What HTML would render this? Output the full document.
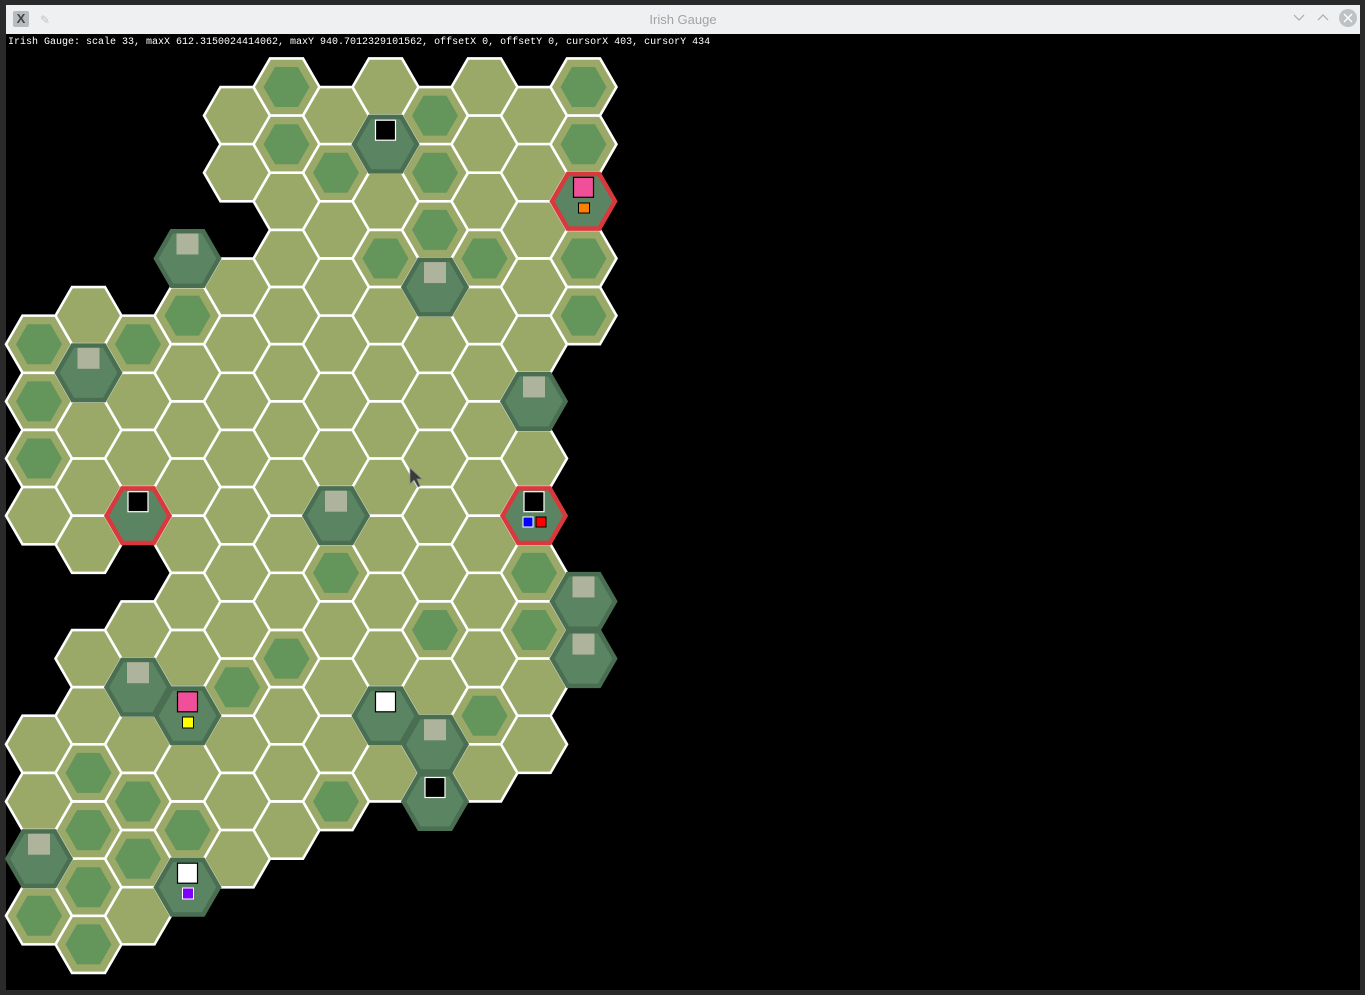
<!DOCTYPE html>
<html><head><meta charset="utf-8"><style>
html,body{margin:0;padding:0;background:#2a2a2b;width:1365px;height:995px;overflow:hidden}
#tb{position:absolute;left:6px;top:5px;width:1354px;height:29px;background:#eff0f1}
#tt{position:absolute;left:0;width:100%;top:7px;text-align:center;font:13px "Liberation Sans",sans-serif;color:#a0a4a8}
#cv{position:absolute;left:6px;top:34px;width:1354px;height:956px;background:#000}
#info{position:absolute;left:8px;top:37px;font:10px "Liberation Mono",monospace;color:#fff;white-space:pre}
svg{position:absolute;left:0;top:0}
</style></head><body>
<div id="tb"><div id="tt">Irish Gauge</div>
<div style="position:absolute;left:7px;top:6px;width:16px;height:16px;background:#b8bcc0;border-radius:2px;font:bold 13px 'Liberation Sans',sans-serif;color:#444;text-align:center;line-height:16px">X</div>
<div style="position:absolute;left:34px;top:8px;color:#c0c3c6;font:12px 'DejaVu Sans',sans-serif">✎</div>
<svg width="1354" height="29" style="left:0;top:0">
<path d="M1288 10 l5 5 l5 -5" fill="none" stroke="#a8abae" stroke-width="1.2"/>
<path d="M1312 15 l5 -5 l5 5" fill="none" stroke="#a8abae" stroke-width="1.2"/>
<circle cx="1342" cy="13" r="9" fill="#bfc2c5"/>
<path d="M1338 9 l8 8 M1346 9 l-8 8" stroke="#fff" stroke-width="1.4"/>
</svg></div>
<div id="cv"></div>
<div id="info">Irish Gauge: scale 33, maxX 612.3150024414062, maxY 940.7012329101562, offsetX 0, offsetY 0, cursorX 403, cursorY 434</div>
<svg width="1365" height="995">
<defs>
<polygon id="p" points="33,0 16.5,28.58 -16.5,28.58 -33,0 -16.5,-28.58 16.5,-28.58" fill="#9ba968" stroke="#fff" stroke-width="2.6"/>
<g id="f"><use href="#p"/><polygon points="23,0 11.5,20 -11.5,20 -23,0 -11.5,-20 11.5,-20" fill="#64955a"/></g>
<polygon id="c" points="31.5,0 15.75,27.3 -15.75,27.3 -31.5,0 -15.75,-27.3 15.75,-27.3" fill="#5a8462" stroke="#4a6e52" stroke-width="4.5"/>
<polygon id="r" points="31.5,0 15.75,27.3 -15.75,27.3 -31.5,0 -15.75,-27.3 15.75,-27.3" fill="#5a8462" stroke="#d9393c" stroke-width="4.5"/>
<rect id="ls" x="-11" y="-25" width="22" height="21" fill="#aeb39b"/>
<rect id="bs" x="-10" y="-24" width="20" height="20" fill="#000" stroke="#fff" stroke-width="1.2"/>
<rect id="ws" x="-10" y="-24" width="20" height="20" fill="#fff" stroke="#000" stroke-width="1.2"/>
<rect id="ps" x="-10" y="-24" width="20" height="20" fill="#f0509a" stroke="#000" stroke-width="1.2"/>
</defs>
<use href="#f" x="39" y="344.2"/><use href="#f" x="39" y="401.4"/><use href="#f" x="39" y="458.5"/><use href="#p" x="39" y="515.7"/>
<use href="#p" x="39" y="744.3"/><use href="#p" x="39" y="801.5"/><use href="#f" x="39" y="915.8"/>
<use href="#p" x="88.5" y="315.6"/><use href="#p" x="88.5" y="430"/><use href="#p" x="88.5" y="487.1"/><use href="#p" x="88.5" y="544.3"/>
<use href="#p" x="88.5" y="658.6"/><use href="#p" x="88.5" y="715.8"/><use href="#f" x="88.5" y="772.9"/><use href="#f" x="88.5" y="830.1"/><use href="#f" x="88.5" y="887.2"/><use href="#f" x="88.5" y="944.4"/>
<use href="#f" x="138" y="344.2"/><use href="#p" x="138" y="401.4"/><use href="#p" x="138" y="458.5"/>
<use href="#p" x="138" y="630"/><use href="#p" x="138" y="744.3"/><use href="#f" x="138" y="801.5"/><use href="#f" x="138" y="858.7"/><use href="#p" x="138" y="915.8"/>
<use href="#f" x="187.5" y="315.6"/><use href="#p" x="187.5" y="372.8"/><use href="#p" x="187.5" y="430"/><use href="#p" x="187.5" y="487.1"/><use href="#p" x="187.5" y="544.3"/><use href="#p" x="187.5" y="601.4"/><use href="#p" x="187.5" y="658.6"/><use href="#p" x="187.5" y="772.9"/><use href="#f" x="187.5" y="830.1"/>
<use href="#p" x="237" y="115.6"/><use href="#p" x="237" y="172.7"/><use href="#p" x="237" y="287.1"/><use href="#p" x="237" y="344.2"/><use href="#p" x="237" y="401.4"/><use href="#p" x="237" y="458.5"/><use href="#p" x="237" y="515.7"/><use href="#p" x="237" y="572.9"/><use href="#p" x="237" y="630"/><use href="#f" x="237" y="687.2"/><use href="#p" x="237" y="744.3"/><use href="#p" x="237" y="801.5"/><use href="#p" x="237" y="858.7"/>
<use href="#f" x="286.5" y="87"/><use href="#f" x="286.5" y="144.2"/><use href="#p" x="286.5" y="201.3"/><use href="#p" x="286.5" y="258.5"/><use href="#p" x="286.5" y="315.6"/><use href="#p" x="286.5" y="372.8"/><use href="#p" x="286.5" y="430"/><use href="#p" x="286.5" y="487.1"/><use href="#p" x="286.5" y="544.3"/><use href="#p" x="286.5" y="601.4"/><use href="#f" x="286.5" y="658.6"/><use href="#p" x="286.5" y="715.8"/><use href="#p" x="286.5" y="772.9"/><use href="#p" x="286.5" y="830.1"/>
<use href="#p" x="336" y="115.6"/><use href="#f" x="336" y="172.7"/><use href="#p" x="336" y="229.9"/><use href="#p" x="336" y="287.1"/><use href="#p" x="336" y="344.2"/><use href="#p" x="336" y="401.4"/><use href="#p" x="336" y="458.5"/><use href="#f" x="336" y="572.9"/><use href="#p" x="336" y="630"/><use href="#p" x="336" y="687.2"/><use href="#p" x="336" y="744.3"/><use href="#f" x="336" y="801.5"/>
<use href="#p" x="385.5" y="87"/><use href="#p" x="385.5" y="201.3"/><use href="#f" x="385.5" y="258.5"/><use href="#p" x="385.5" y="315.6"/><use href="#p" x="385.5" y="372.8"/><use href="#p" x="385.5" y="430"/><use href="#p" x="385.5" y="487.1"/><use href="#p" x="385.5" y="544.3"/><use href="#p" x="385.5" y="601.4"/><use href="#p" x="385.5" y="658.6"/><use href="#p" x="385.5" y="772.9"/>
<use href="#f" x="435" y="115.6"/><use href="#f" x="435" y="172.7"/><use href="#f" x="435" y="229.9"/><use href="#p" x="435" y="344.2"/><use href="#p" x="435" y="401.4"/><use href="#p" x="435" y="458.5"/><use href="#p" x="435" y="515.7"/><use href="#p" x="435" y="572.9"/><use href="#f" x="435" y="630"/><use href="#p" x="435" y="687.2"/>
<use href="#p" x="484.5" y="87"/><use href="#p" x="484.5" y="144.2"/><use href="#p" x="484.5" y="201.3"/><use href="#f" x="484.5" y="258.5"/><use href="#p" x="484.5" y="315.6"/><use href="#p" x="484.5" y="372.8"/><use href="#p" x="484.5" y="430"/><use href="#p" x="484.5" y="487.1"/><use href="#p" x="484.5" y="544.3"/><use href="#p" x="484.5" y="601.4"/><use href="#p" x="484.5" y="658.6"/><use href="#f" x="484.5" y="715.8"/><use href="#p" x="484.5" y="772.9"/>
<use href="#p" x="534" y="115.6"/><use href="#p" x="534" y="172.7"/><use href="#p" x="534" y="229.9"/><use href="#p" x="534" y="287.1"/><use href="#p" x="534" y="344.2"/><use href="#p" x="534" y="458.5"/><use href="#f" x="534" y="572.9"/><use href="#f" x="534" y="630"/><use href="#p" x="534" y="687.2"/><use href="#p" x="534" y="744.3"/>
<use href="#f" x="583.5" y="87"/><use href="#f" x="583.5" y="144.2"/><use href="#f" x="583.5" y="258.5"/><use href="#f" x="583.5" y="315.6"/>
<use href="#c" x="39" y="858.7"/><use href="#ls" x="39" y="858.7"/>
<use href="#c" x="88.5" y="372.8"/><use href="#ls" x="88.5" y="372.8"/>
<use href="#r" x="138" y="515.7"/><use href="#bs" x="138" y="515.7"/>
<use href="#c" x="138" y="687.2"/><use href="#ls" x="138" y="687.2"/>
<use href="#c" x="187.5" y="258.5"/><use href="#ls" x="187.5" y="258.5"/>
<use href="#c" x="187.5" y="715.8"/><use href="#ps" x="187.5" y="715.8"/><rect x="182.5" y="717" width="11" height="11" fill="#ffff00" stroke="#000"/>
<use href="#c" x="187.5" y="887.2"/><use href="#ws" x="187.5" y="887.2"/><rect x="182.5" y="888" width="11" height="11" fill="#8000ff" stroke="#fff"/>
<use href="#c" x="336" y="515.7"/><use href="#ls" x="336" y="515.7"/>
<use href="#c" x="385.5" y="144.2"/><use href="#bs" x="385.5" y="144.2"/>
<use href="#c" x="385.5" y="715.8"/><use href="#ws" x="385.5" y="715.8"/>
<use href="#c" x="435" y="287.1"/><use href="#ls" x="435" y="287.1"/>
<use href="#c" x="435" y="744.3"/><use href="#ls" x="435" y="744.3"/>
<use href="#c" x="435" y="801.5"/><use href="#bs" x="435" y="801.5"/>
<use href="#c" x="534" y="401.4"/><use href="#ls" x="534" y="401.4"/>
<use href="#r" x="534" y="515.7"/><use href="#bs" x="534" y="515.7"/>
<rect x="523" y="517" width="10" height="10" fill="#0000ff" stroke="#fff"/><rect x="536" y="517" width="10" height="10" fill="#ff0000" stroke="#000"/>
<use href="#c" x="583.5" y="601.4"/><use href="#ls" x="583.5" y="601.4"/>
<use href="#c" x="583.5" y="658.6"/><use href="#ls" x="583.5" y="658.6"/>
<use href="#r" x="583.5" y="201.3"/><use href="#ps" x="583.5" y="201.3"/><rect x="578.5" y="203" width="11" height="10" fill="#ff8000" stroke="#000"/>
<path d="M410 468 L410 484 L414 480 L418 487 L420 486 L417 479 L422 479 Z" fill="#3a3a3a" stroke="#888" stroke-width="0.8"/>
</svg>
</body></html>
